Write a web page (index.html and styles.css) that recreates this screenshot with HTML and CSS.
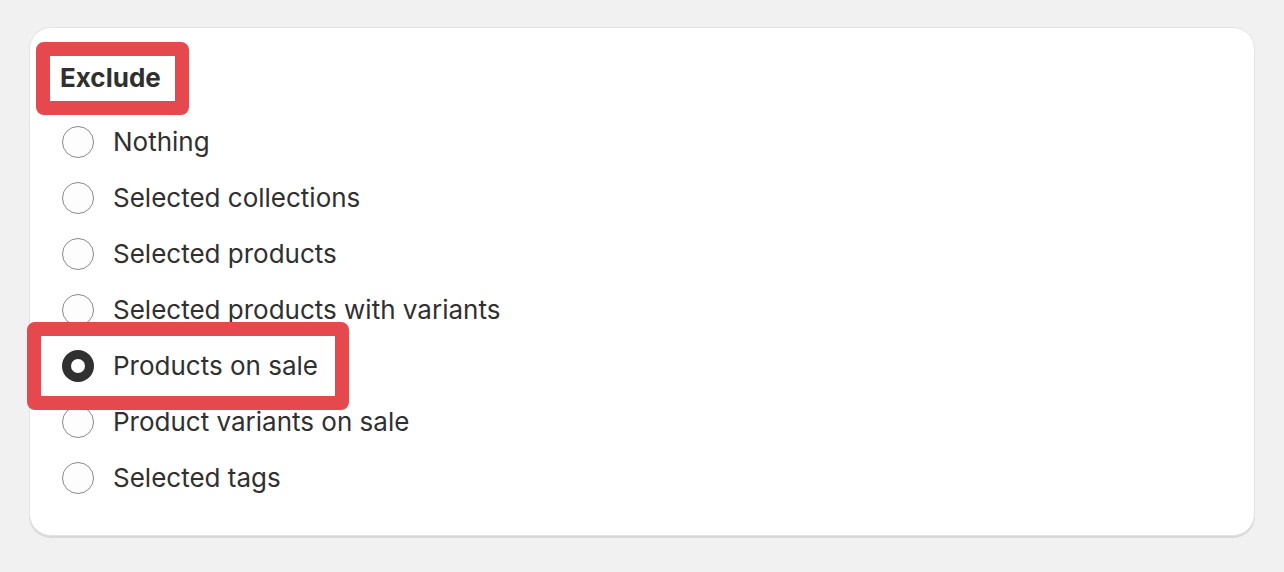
FILE: index.html
```html
<!DOCTYPE html>
<html lang="en">
<head>
<meta charset="utf-8">
<title>Exclude</title>
<link rel="stylesheet" href="styles.css">
</head>
<body>
<div class="page">
  <section class="card">
    <h2 class="heading">Exclude</h2>
    <ul class="choices">
      <li class="choice"><span class="radio"></span><span class="label">Nothing</span></li>
      <li class="choice"><span class="radio"></span><span class="label">Selected collections</span></li>
      <li class="choice"><span class="radio"></span><span class="label">Selected products</span></li>
      <li class="choice"><span class="radio"></span><span class="label">Selected products with variants</span></li>
      <li class="choice"><span class="radio radio-checked"></span><span class="label">Products on sale</span></li>
      <li class="choice"><span class="radio"></span><span class="label">Product variants on sale</span></li>
      <li class="choice"><span class="radio"></span><span class="label">Selected tags</span></li>
    </ul>
  </section>
  <div class="mark mark-heading"></div>
  <div class="mark mark-choice"></div>
</div>
</body>
</html>
```
FILE: styles.css
```css
* { box-sizing: border-box; }
html, body {
  margin: 0;
  padding: 0;
  background: #f1f1f1;
}
body {
  font-family: Inter, "Noto Sans", "Liberation Sans", sans-serif;
  color: #303030;
  width: 1284px;
  height: 572px;
  overflow: hidden;
}
.page {
  position: relative;
  padding: 27px 29px 0 29px;
}
.card {
  background: #ffffff;
  border: 1px solid #e3e3e3;
  border-radius: 22px;
  box-shadow: 0 2px 0 0 rgba(0, 0, 0, 0.10);
  padding: 30px 32px 29px 32px;
  height: 509px;
}
.heading {
  margin: 0 0 16px -2px;
  font-size: 26px;
  line-height: 40px;
  font-weight: 650;
  letter-spacing: 0;
}
.choices {
  list-style: none;
  margin: 0;
  padding: 0;
  display: flex;
  flex-direction: column;
}
.choice {
  height: 56px;
  display: flex;
  align-items: center;
  gap: 19px;
}
.radio {
  width: 32px;
  height: 32px;
  border-radius: 50%;
  border: 1px solid #8a8a8a;
  background: #fdfdfd;
  flex: none;
}
.radio-checked {
  border: 9px solid #303030;
  background: #ffffff;
}
.label {
  font-size: 26px;
  line-height: 40px;
  font-weight: 400;
}
.mark {
  position: absolute;
  border: 14px solid #e5484d;
  border-radius: 8px;
}
.mark-heading {
  left: 36px;
  top: 42px;
  width: 153px;
  height: 73px;
}
.mark-choice {
  left: 27px;
  top: 322px;
  width: 322px;
  height: 88px;
}
```
